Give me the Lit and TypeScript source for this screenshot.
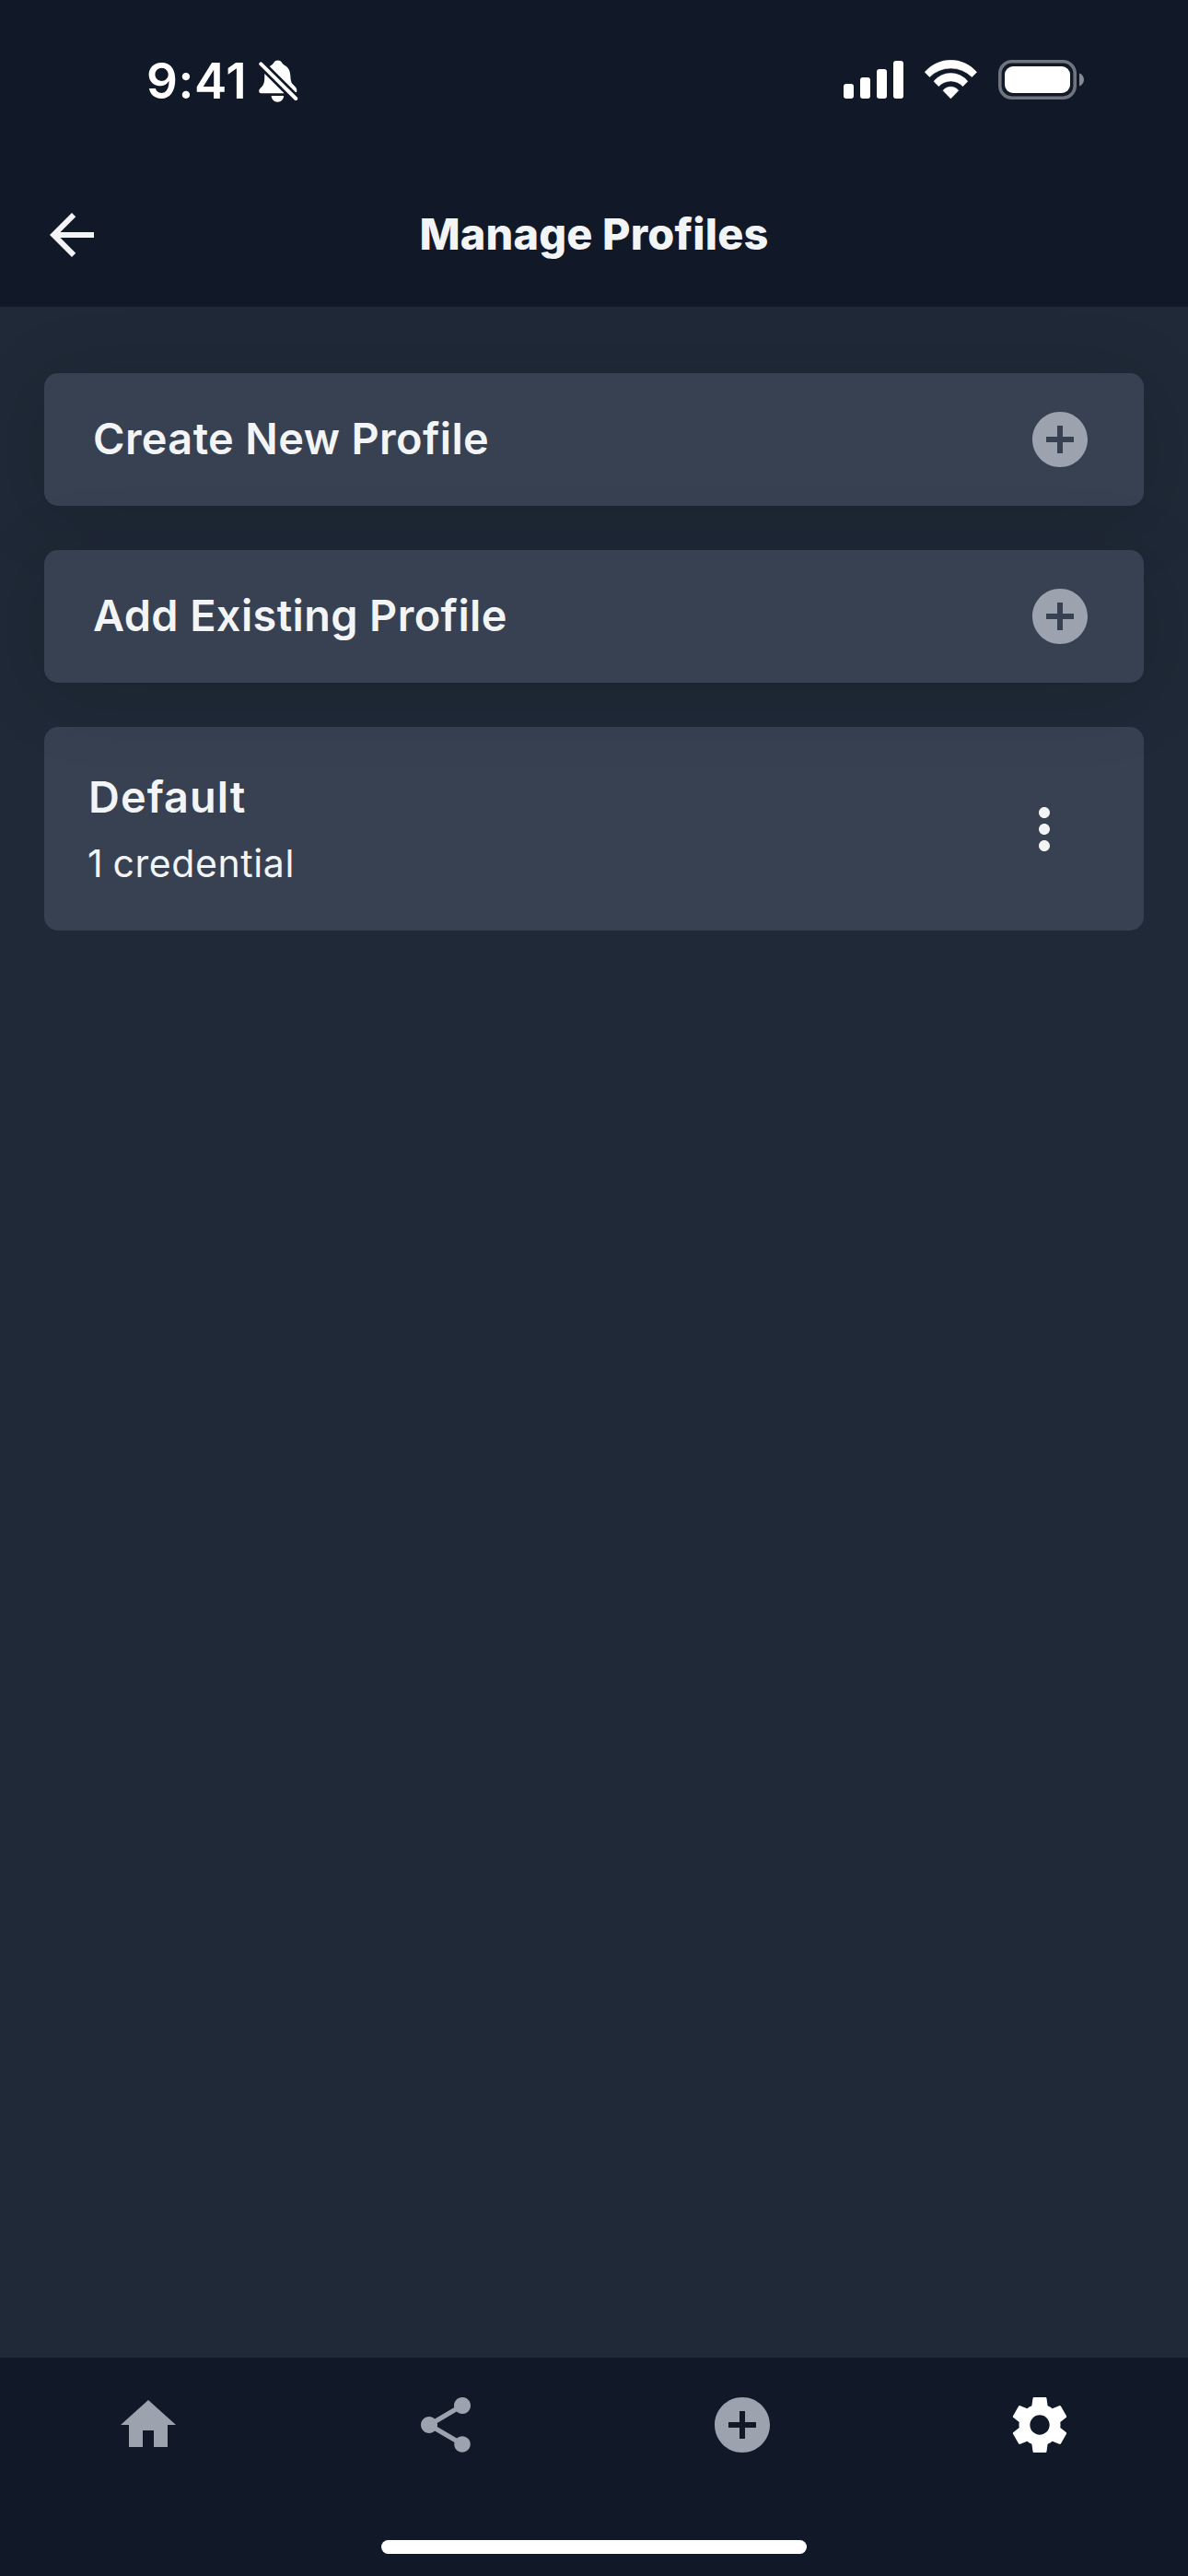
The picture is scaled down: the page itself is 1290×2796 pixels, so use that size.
import { LitElement, html, css, svg } from "lit";
import { customElement, property } from "lit/decorators.js";

const ICONS: Record<string, string> = {
  back: "M20 11H7.83l5.59-5.59L12 4l-8 8 8 8 1.41-1.41L7.83 13H20v-2z",
  add: "M12 2C6.48 2 2 6.48 2 12s4.48 10 10 10 10-4.48 10-10S17.52 2 12 2zm5 11h-4v4h-2v-4H7v-2h4V7h2v4h4v2z",
  more: "M12 8c1.1 0 2-.9 2-2s-.9-2-2-2-2 .9-2 2 .9 2 2 2zm0 2c-1.1 0-2 .9-2 2s.9 2 2 2 2-.9 2-2-.9-2-2-2zm0 6c-1.1 0-2 .9-2 2s.9 2 2 2 2-.9 2-2-.9-2-2-2z",
  home: "M10 20v-6h4v6h5v-8h3L12 3 2 12h3v8z",
  share:
    "M18 16.08c-.76 0-1.44.3-1.96.77L8.91 12.7c.05-.23.09-.46.09-.7s-.04-.47-.09-.7l7.05-4.11c.54.5 1.25.81 2.04.81 1.66 0 3-1.34 3-3s-1.34-3-3-3-3 1.34-3 3c0 .24.04.47.09.7L8.04 9.81C7.5 9.31 6.79 9 6 9c-1.66 0-3 1.34-3 3s1.34 3 3 3c.79 0 1.5-.31 2.04-.81l7.12 4.16c-.05.21-.08.43-.08.65 0 1.61 1.31 2.92 2.92 2.92s2.92-1.31 2.92-2.92-1.31-2.92-2.92-2.92z",
  settings:
    "M12 15.55A3.55 3.55 0 1 1 12 8.45A3.55 3.55 0 1 1 12 15.55M19.43 12.97C19.47 12.65 19.5 12.33 19.5 12C19.5 11.67 19.47 11.34 19.43 11L21.54 9.37C21.73 9.22 21.78 8.95 21.66 8.73L19.66 5.27C19.54 5.05 19.27 4.96 19.05 5.05L16.56 6.05C16.04 5.66 15.5 5.32 14.87 5.07L14.5 2.42C14.46 2.18 14.25 2 14 2H10C9.75 2 9.54 2.18 9.5 2.42L9.13 5.07C8.5 5.32 7.96 5.66 7.44 6.05L4.95 5.05C4.73 4.96 4.46 5.05 4.34 5.27L2.34 8.73C2.21 8.95 2.27 9.22 2.46 9.37L4.57 11C4.53 11.34 4.5 11.67 4.5 12C4.5 12.33 4.53 12.65 4.57 12.97L2.46 14.63C2.27 14.78 2.21 15.05 2.34 15.27L4.34 18.73C4.46 18.95 4.73 19.03 4.95 18.95L7.44 17.94C7.96 18.34 8.5 18.68 9.13 18.93L9.5 21.58C9.54 21.82 9.75 22 10 22H14C14.25 22 14.46 21.82 14.5 21.58L14.87 18.93C15.5 18.67 16.04 18.34 16.56 17.94L19.05 18.95C19.27 19.03 19.54 18.95 19.66 18.73L21.66 15.27C21.78 15.05 21.73 14.78 21.54 14.63L19.43 12.97Z",
};

@customElement("app-icon")
export class AppIcon extends LitElement {
  static styles = css`
    :host {
      display: block;
      width: 72px;
      height: 72px;
      flex: none;
    }
    svg {
      display: block;
      width: 100%;
      height: 100%;
      fill: currentColor;
    }
  `;
  @property() name = "add";
  render() {
    return html`<svg viewBox="0 0 24 24" aria-hidden="true">
      ${svg`<path fill-rule="evenodd" d=${ICONS[this.name]}></path>`}
    </svg>`;
  }
}

@customElement("status-bar")
export class StatusBar extends LitElement {
  static styles = css`
    :host {
      display: flex;
      align-items: flex-start;
      box-sizing: border-box;
      height: 177px;
      padding: 65px 112px 0 159px;
      color: #fff;
    }
    .time {
      width: 122px;
      font: 600 53px/46px Inter, "Liberation Sans", sans-serif;
      letter-spacing: 0.6px;
      white-space: nowrap;
    }
    svg {
      display: block;
      flex: none;
    }
    .system {
      margin-left: auto;
    }
  `;
  render() {
    return html`
      <div class="time">9:41</div>
      <svg width="43" height="47" viewBox="0 0 43 47" fill="#fff">
        <path d="M11.7 6.9L14 5.6C15.5 4.8 16 3.6 16.6 2.6C18.2-.3 23.2-.3 24.8 2.6C25.4 3.7 26 4.8 27.5 5.6C32 8 34 11.5 34.3 17C34.6 23 35.2 25 38 27.5C40.5 29.8 41.8 32 41.2 34.4Q40.8 35.8 39.6 34.8Z" />
        <path d="M6.3 15L27.6 36.2H2.4C-.3 36.2-.4 33 1.3 31.3C4.5 28 6 26 6.2 21Z" />
        <path d="M13.6 39H27.2C26.8 43 24 45.7 20.4 45.7S14 43 13.6 39Z" />
        <path d="M2.3 4.4L40.2 42" stroke="#fff" stroke-width="4" stroke-linecap="round" />
      </svg>
      <svg class="system" width="262" height="44" viewBox="0 0 262 44" fill="#fff">
        <rect x="0" y="26" width="11" height="16" rx="3" />
        <rect x="18" y="19" width="11" height="23" rx="3" />
        <rect x="36" y="10" width="11" height="32" rx="3" />
        <rect x="54" y="1" width="11" height="41" rx="3" />
        <g transform="translate(116.4 42.3)" stroke="#fff" stroke-width=".6" stroke-linejoin="round">
          <path d="M-28.2-29A37.2 37.2 0 0 1 28.2-29L23-23.8A32.6 32.6 0 0 0-23-23.8Z" />
          <path d="M-18.4-19A23.7 23.7 0 0 1 18.4-19L13.1-13.6A17.7 17.7 0 0 0-13.1-13.6Z" />
          <path d="M-8.4-9A10.7 10.7 0 0 1 8.4-9L0-.4Z" />
        </g>
        <rect x="169.8" y="1.8" width="81.4" height="39.4" rx="13" fill="none" stroke="#70747e" stroke-width="3.6" />
        <rect x="175" y="7" width="71" height="29" rx="9" />
        <path d="M256 14.5C259 15.6 261 18.3 261 21.5S259 27.5 256 28.6Z" fill="#888b93" />
      </svg>
    `;
  }
}

@customElement("action-card")
export class ActionCard extends LitElement {
  static styles = css`
    :host {
      display: flex;
      align-items: center;
      justify-content: space-between;
      box-sizing: border-box;
      height: 144px;
      padding: 0 55px 0 54px;
      border-radius: 15px;
      background: #374151;
      box-shadow: 0 12px 90px rgba(0, 0, 0, 0.12);
    }
    .label {
      margin-left: -1px;
      padding-bottom: 2px;
      font-size: 46.8px;
      font-weight: 600;
      letter-spacing: 0.4px;
      white-space: nowrap;
    }
    .icon {
      color: #9ca3af;
    }
  `;
  @property() label = "";
  render() {
    return html`<span class="label">${this.label}</span><app-icon class="icon" name="add"></app-icon>`;
  }
}

@customElement("profile-card")
export class ProfileCard extends LitElement {
  static styles = css`
    :host {
      display: flex;
      align-items: center;
      justify-content: space-between;
      box-sizing: border-box;
      height: 221px;
      padding: 0 72px 0 48px;
      border-radius: 15px;
      background: #374151;
    }
    .text {
      display: flex;
      flex-direction: column;
      gap: 14px;
      align-self: flex-start;
      padding-top: 47px;
      line-height: 58px;
      white-space: nowrap;
    }
    .name {
      font-size: 46.8px;
      font-weight: 600;
      letter-spacing: 1.1px;
    }
    .count {
      margin-left: -1px;
      font-size: 41px;
      letter-spacing: 0.6px;
      word-spacing: -2px;
    }
  `;
  @property() name = "";
  @property() count = "";
  render() {
    return html`
      <div class="text">
        <span class="name">${this.name}</span>
        <span class="count">${this.count}</span>
      </div>
      <app-icon name="more"></app-icon>
    `;
  }
}

@customElement("app-root")
export class AppRoot extends LitElement {
  static styles = css`
    :host {
      display: flex;
      flex-direction: column;
      width: 1290px;
      height: 2796px;
      overflow: hidden;
      background: #1f2937;
      color: #f3f4f6;
      font-family: Inter, "Liberation Sans", sans-serif;
    }
    .top,
    .bottom {
      position: relative;
      z-index: 2;
      flex: none;
      background: #111827;
    }
    .header {
      display: grid;
      grid-template-columns: 72px 1fr 72px;
      align-items: center;
      height: 156px;
      padding: 0 42px;
    }
    .title {
      margin: 0;
      padding-bottom: 2px;
      font-size: 46.8px;
      font-weight: 800;
      letter-spacing: 0.2px;
      text-align: center;
    }
    .content {
      display: flex;
      flex: 1;
      flex-direction: column;
      gap: 48px;
      padding: 72px 48px;
    }
    .actions {
      position: relative;
      z-index: 1;
      display: flex;
      flex-direction: column;
      gap: 48px;
    }
    .bottom {
      display: flex;
      flex-direction: column;
      align-items: center;
      justify-content: space-between;
      box-sizing: border-box;
      height: 237px;
      padding: 37px 0 24px;
    }
    .tabs {
      display: grid;
      grid-template-columns: repeat(4, 1fr);
      justify-items: center;
      width: 100%;
      color: #9ca3af;
    }
    .active {
      color: #fff;
    }
    .indicator {
      width: 462px;
      height: 15px;
      border-radius: 8px;
      background: #fff;
    }
  `;
  render() {
    const tabs = ["home", "share", "add", "settings"];
    return html`
      <div class="top">
        <status-bar></status-bar>
        <header class="header">
          <app-icon name="back"></app-icon>
          <h1 class="title">Manage Profiles</h1>
        </header>
      </div>
      <main class="content">
        <div class="actions">
          <action-card label="Create New Profile"></action-card>
          <action-card label="Add Existing Profile"></action-card>
        </div>
        <profile-card name="Default" count="1 credential"></profile-card>
      </main>
      <div class="bottom">
        <nav class="tabs">
          ${tabs.map((t) => html`<app-icon class=${t === "settings" ? "active" : ""} name=${t}></app-icon>`)}
        </nav>
        <div class="indicator"></div>
      </div>
    `;
  }
}
